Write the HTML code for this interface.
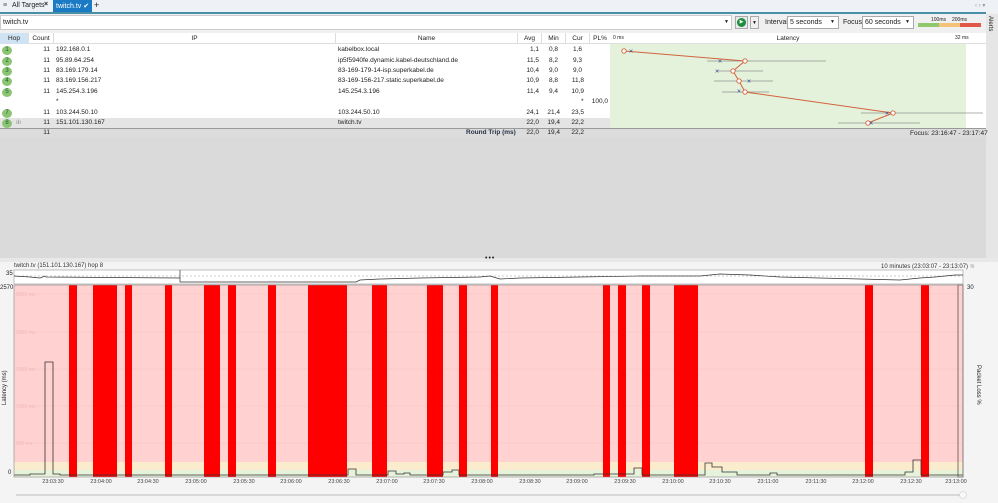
<!DOCTYPE html><html><head><style>
*{margin:0;padding:0;box-sizing:border-box}
body{width:998px;height:503px;overflow:hidden;background:#f0f0f0;font-family:"Liberation Sans",sans-serif;font-size:6.5px;color:#222;position:relative}
.a{position:absolute}
.row{position:absolute;left:0;width:610px;height:10px;line-height:10px}
.row span{position:absolute}
.num{width:10px;height:9px;border-radius:50%;background:#8bc572;color:#254;font-size:6px;text-align:center;line-height:9px;left:2px;top:0.5px}
.r{text-align:right}
</style></head><body>
<!-- tabs -->
<div class="a" style="left:0;top:0;width:998px;height:12px;background:#eef1f5"></div>
<div class="a" style="left:3px;top:2px;font-size:7px;color:#555">≡</div>
<div class="a" style="left:12px;top:2px;font-size:7px">All Targets</div>
<div class="a" style="left:44px;top:1px;font-size:7px;font-weight:bold">×</div>
<div class="a" style="left:53px;top:0;width:39px;height:12px;background:#1a7ac4;color:#fff;font-size:7px;padding:2px 0 0 3px">twitch.tv ✔</div>
<div class="a" style="left:94px;top:0;font-size:9px">+</div>
<div class="a" style="left:975px;top:2px;font-size:6px;color:#999">‹ › ▾</div>
<div class="a" style="left:0;top:12px;width:986px;height:2px;background:#4a8fa8"></div>
<!-- search row -->
<div class="a" style="left:0;top:15px;width:732px;height:15px;background:#fff;border:1px solid #ccc;font-size:7px;padding:3px 2px">twitch.tv</div>
<div class="a" style="left:724px;top:19px;font-size:5px">▼</div>
<div class="a" style="left:735px;top:16px;width:13px;height:13px;border:1px solid #aaa;background:#e8e8e8"></div>
<div class="a" style="left:737px;top:18px;width:9px;height:9px;border-radius:50%;background:#1e8e3e;color:#fff;font-size:5px;text-align:center;line-height:9px">▶</div>
<div class="a" style="left:750px;top:16px;width:9px;height:13px;border:1px solid #aaa;font-size:5px;text-align:center;line-height:12px">▼</div>
<div class="a" style="left:765px;top:19px;font-size:7px">Interval</div>
<div class="a" style="left:787px;top:16px;width:52px;height:13px;background:#fff;border:1px solid #aaa;font-size:7px;padding:2px">5 seconds<span style="position:absolute;right:3px;font-size:5px">▼</span></div>
<div class="a" style="left:843px;top:19px;font-size:7px">Focus</div>
<div class="a" style="left:862px;top:16px;width:52px;height:13px;background:#fff;border:1px solid #aaa;font-size:7px;padding:2px">60 seconds<span style="position:absolute;right:3px;font-size:5px">▼</span></div>
<div class="a" style="left:918px;top:23px;width:21px;height:4px;background:#8fc96e"></div>
<div class="a" style="left:939px;top:23px;width:21px;height:4px;background:#f5c27a"></div>
<div class="a" style="left:960px;top:23px;width:21px;height:4px;background:#e0584a"></div>
<div class="a" style="left:931px;top:17px;font-size:5px">100ms</div>
<div class="a" style="left:952px;top:17px;font-size:5px">200ms</div>
<div class="a" style="left:986px;top:14px;width:12px;height:250px;background:#e6e6e6"></div>
<div class="a" style="left:987px;top:16px;font-size:6px;writing-mode:vertical-rl">Alerts</div>
<!-- table -->
<div class="a" style="left:0;top:33px;width:986px;height:105px;background:#fff"></div>
<div class="a" style="left:0;top:33px;width:986px;height:11px;background:#fff;border-bottom:1px solid #ddd;font-size:6.5px;line-height:11px">
<span class="a" style="left:0;width:28px;height:11px;background:#cfe3f3;text-align:center">Hop</span>
<span class="a" style="left:28px;width:25px;text-align:center;border-left:1px solid #ddd">Count</span>
<span class="a" style="left:53px;width:282px;text-align:center;border-left:1px solid #ddd">IP</span>
<span class="a" style="left:335px;width:182px;text-align:center;border-left:1px solid #ddd">Name</span>
<span class="a" style="left:517px;width:24px;text-align:center;border-left:1px solid #ddd">Avg</span>
<span class="a" style="left:541px;width:24px;text-align:center;border-left:1px solid #ddd">Min</span>
<span class="a" style="left:565px;width:24px;text-align:center;border-left:1px solid #ddd">Cur</span>
<span class="a" style="left:589px;width:21px;text-align:center;border-left:1px solid #ddd">PL%</span>
<span class="a" style="left:613px;font-size:5px">0 ms</span>
<span class="a" style="left:610px;width:356px;text-align:center">Latency</span>
<span class="a" style="left:955px;font-size:5px">32 ms</span>
</div>
<div class="a" style="left:610px;top:44px;width:356px;height:84px;background:#e4f1db"></div>
<div class="a" style="left:0;top:118px;width:610px;height:10px;background:#e4e4e4"></div>
<div class="a" style="left:0;top:128px;width:986px;height:10px;background:#dcdcdc;border-top:1px solid #999"></div>
<div id="rows"></div>
<div class="row" style="top:45px"><span class="num">1</span><span class="r" style="left:28px;width:22px">11</span><span style="left:56px">192.168.0.1</span><span style="left:338px">kabelbox.local</span><span class="r" style="left:517px;width:22px">1,1</span><span class="r" style="left:541px;width:17px">0,8</span><span class="r" style="left:565px;width:17px">1,6</span></div>
<div class="row" style="top:56px"><span class="num">2</span><span class="r" style="left:28px;width:22px">11</span><span style="left:56px">95.89.64.254</span><span style="left:338px">ip5f5940fe.dynamic.kabel-deutschland.de</span><span class="r" style="left:517px;width:22px">11,5</span><span class="r" style="left:541px;width:17px">8,2</span><span class="r" style="left:565px;width:17px">9,3</span></div>
<div class="row" style="top:66px"><span class="num">3</span><span class="r" style="left:28px;width:22px">11</span><span style="left:56px">83.169.179.14</span><span style="left:338px">83-169-179-14-isp.superkabel.de</span><span class="r" style="left:517px;width:22px">10,4</span><span class="r" style="left:541px;width:17px">9,0</span><span class="r" style="left:565px;width:17px">9,0</span></div>
<div class="row" style="top:76px"><span class="num">4</span><span class="r" style="left:28px;width:22px">11</span><span style="left:56px">83.169.156.217</span><span style="left:338px">83-169-156-217.static.superkabel.de</span><span class="r" style="left:517px;width:22px">10,9</span><span class="r" style="left:541px;width:17px">8,8</span><span class="r" style="left:565px;width:19px">11,8</span></div>
<div class="row" style="top:87px"><span class="num">5</span><span class="r" style="left:28px;width:22px">11</span><span style="left:56px">145.254.3.196</span><span style="left:338px">145.254.3.196</span><span class="r" style="left:517px;width:22px">11,4</span><span class="r" style="left:541px;width:17px">9,4</span><span class="r" style="left:565px;width:19px">10,9</span></div>
<div class="row" style="top:97px"><span style="left:56px">*</span><span style="left:581px">*</span><span class="r" style="left:589px;width:19px">100,0</span></div>
<div class="row" style="top:108px"><span class="num">7</span><span class="r" style="left:28px;width:22px">11</span><span style="left:56px">103.244.50.10</span><span style="left:338px">103.244.50.10</span><span class="r" style="left:517px;width:22px">24,1</span><span class="r" style="left:541px;width:19px">21,4</span><span class="r" style="left:565px;width:19px">23,5</span></div>
<div class="row" style="top:118px"><span class="num">8</span><span style="left:16px;color:#888">ılı</span><span class="r" style="left:28px;width:22px">11</span><span style="left:56px">151.101.130.167</span><span style="left:338px">twitch.tv</span><span class="r" style="left:517px;width:22px">22,0</span><span class="r" style="left:541px;width:19px">19,4</span><span class="r" style="left:565px;width:19px">22,2</span></div>
<div class="row" style="top:128px"><span class="r" style="left:28px;width:22px">11</span><span style="left:466px;font-weight:bold;color:#234">Round Trip (ms)</span><span class="r" style="left:517px;width:22px">22,0</span><span class="r" style="left:541px;width:19px">19,4</span><span class="r" style="left:565px;width:19px">22,2</span></div>
<div class="a" style="left:910px;top:130px;font-size:6.5px">Focus: 23:16:47 - 23:17:47</div>
<svg class="a" style="left:0;top:0" width="998" height="140">
<g stroke="#666" stroke-width="0.6" fill="none">
<path d="M707 61H826M717 71H763M714 81H773M722 92H769M861 113H983M838 123H920"/>
</g>
<polyline points="624,51 745,61 733,71 739,81 745,92 893,113 868,123" fill="none" stroke="#d2623c" stroke-width="1"/>
<g fill="#fff" stroke="#d2623c" stroke-width="0.9">
<circle cx="624" cy="51" r="2.2"/><circle cx="745" cy="61" r="2.2"/><circle cx="733" cy="71" r="2.2"/><circle cx="739" cy="81" r="2.2"/><circle cx="745" cy="92" r="2.2"/><circle cx="893" cy="113" r="2.2"/><circle cx="868" cy="123" r="2.2"/></g>
<g fill="#3344aa" font-size="7" font-family="Liberation Sans" text-anchor="middle">
<text x="631" y="53.5">×</text><text x="720" y="63.5">×</text><text x="717" y="73.5">×</text><text x="749" y="83.5">×</text><text x="739" y="93.5">×</text><text x="887" y="115.5">×</text><text x="871" y="125.5">×</text></g>
</svg>
<!-- gray empty -->
<div class="a" style="left:0;top:138px;width:986px;height:120px;background:#dadada"></div>
<div class="a" style="left:0;top:258px;width:998px;height:4px;background:#e8e8e8"></div>
<div class="a" style="left:485px;top:255px;font-size:7px;letter-spacing:1px">•••</div>
<!-- chart panel -->
<div class="a" style="left:0;top:262px;width:998px;height:241px;background:#f4f4f4"></div>
<div class="a" style="left:14px;top:263px;font-size:6px;color:#333">twitch.tv (151.101.130.167) hop 8</div>
<div class="a" style="left:881px;top:263px;font-size:6px;color:#333">10 minutes (23:03:07 - 23:13:07) <span style="color:#999">≋</span></div>
<div class="a" style="left:6px;top:271px;font-size:6px">35</div>
<div class="a" style="left:0;top:285px;font-size:6px">2570</div>
<div class="a" style="left:8px;top:470px;font-size:6px">0</div>
<div class="a" style="left:967px;top:285px;font-size:6px">30</div>
<div class="a" style="left:2px;top:380px;font-size:6px;transform:rotate(-90deg);transform-origin:left top;white-space:nowrap;top:405px">Latency (ms)</div>
<div class="a" style="left:975px;top:365px;font-size:6px;writing-mode:vertical-rl;white-space:nowrap">Packet Loss %</div>
<svg class="a" style="left:0;top:0" width="998" height="503">
<rect x="14" y="270" width="949" height="14" fill="#fff" stroke="#999" stroke-width="0.6"/>
<line x1="14" y1="276" x2="963" y2="276" stroke="#999" stroke-dasharray="2,2" stroke-width="0.6"/>
<polyline points="14,276 30,277 40,278 45,276 46,277 180,278 180,270 180,282 356,282 360,280 380,279 420,278 480,277 490,276 500,279 520,278 580,277 640,276 700,276 720,274 750,275 780,277 820,278 860,279 900,280 920,278 935,277 955,275 963,275" fill="none" stroke="#333" stroke-width="0.7"/>
<rect x="14" y="285" width="949" height="177" fill="#ffd1d0"/>
<rect x="14" y="462" width="949" height="8" fill="#fbeccd"/>
<rect x="14" y="470" width="949" height="7" fill="#e6f2da"/>
<g stroke="#f3c2c1" stroke-width="0.5"><path d="M14 294H963M14 332H963M14 369H963M14 406H963M14 443H963"/></g>
<g fill="#ebb" font-size="5" font-family="Liberation Sans"><text x="16" y="296">2500 ms</text><text x="16" y="334">2000 ms</text><text x="16" y="371">1500 ms</text><text x="16" y="408">1000 ms</text><text x="16" y="445">500 ms</text></g>
<g fill="#ff0000">
<rect x="69" y="285" width="8" height="192"/><rect x="93" y="285" width="24" height="192"/><rect x="125" y="285" width="7" height="192"/><rect x="165" y="285" width="7" height="192"/><rect x="204" y="285" width="16" height="192"/><rect x="228" y="285" width="8" height="192"/><rect x="268" y="285" width="8" height="192"/><rect x="308" y="285" width="39" height="192"/><rect x="372" y="285" width="15" height="192"/><rect x="427" y="285" width="16" height="192"/><rect x="459" y="285" width="8" height="192"/><rect x="491" y="285" width="7" height="192"/><rect x="603" y="285" width="7" height="192"/><rect x="618" y="285" width="8" height="192"/><rect x="642" y="285" width="8" height="192"/><rect x="674" y="285" width="24" height="192"/><rect x="865" y="285" width="8" height="192"/><rect x="921" y="285" width="8" height="192"/>
</g>
<polyline points="14,475 30,475 30,474 45,474 45,362 53,362 53,474 60,474 60,475 348,475 348,469 356,469 356,475 388,475 388,471 396,471 396,474 404,474 404,473 410,473 410,475 443,475 443,472 452,472 452,470 459,470 459,475 594,475 594,474 603,474 634,474 634,468 642,468 642,475 705,475 705,463 712,463 712,467 722,467 722,472 737,472 737,475 770,475 770,473 777,473 777,475 905,475 905,472 913,472 913,460 921,460 921,475 963,475" fill="none" stroke="#333" stroke-width="0.8"/>
<rect x="958" y="285" width="5" height="192" fill="none" stroke="#444" stroke-width="0.7"/>
<rect x="14" y="285" width="949" height="192" fill="none" stroke="#888" stroke-width="0.6"/>
<g font-size="5.5" font-family="Liberation Sans" fill="#444" text-anchor="middle">
<text x="53" y="483">23:03:30</text><text x="101" y="483">23:04:00</text><text x="148" y="483">23:04:30</text><text x="196" y="483">23:05:00</text><text x="244" y="483">23:05:30</text><text x="291" y="483">23:06:00</text><text x="339" y="483">23:06:30</text><text x="387" y="483">23:07:00</text><text x="434" y="483">23:07:30</text><text x="482" y="483">23:08:00</text><text x="530" y="483">23:08:30</text><text x="577" y="483">23:09:00</text><text x="625" y="483">23:09:30</text><text x="673" y="483">23:10:00</text><text x="720" y="483">23:10:30</text><text x="768" y="483">23:11:00</text><text x="816" y="483">23:11:30</text><text x="863" y="483">23:12:00</text><text x="911" y="483">23:12:30</text><text x="956" y="483">23:13:00</text></g>
<line x1="16" y1="495" x2="962" y2="495" stroke="#bbb" stroke-width="1"/>
<circle cx="963" cy="495" r="3.5" fill="#f8f8f8" stroke="#ccc" stroke-width="0.6"/>
</svg>
</body></html>
